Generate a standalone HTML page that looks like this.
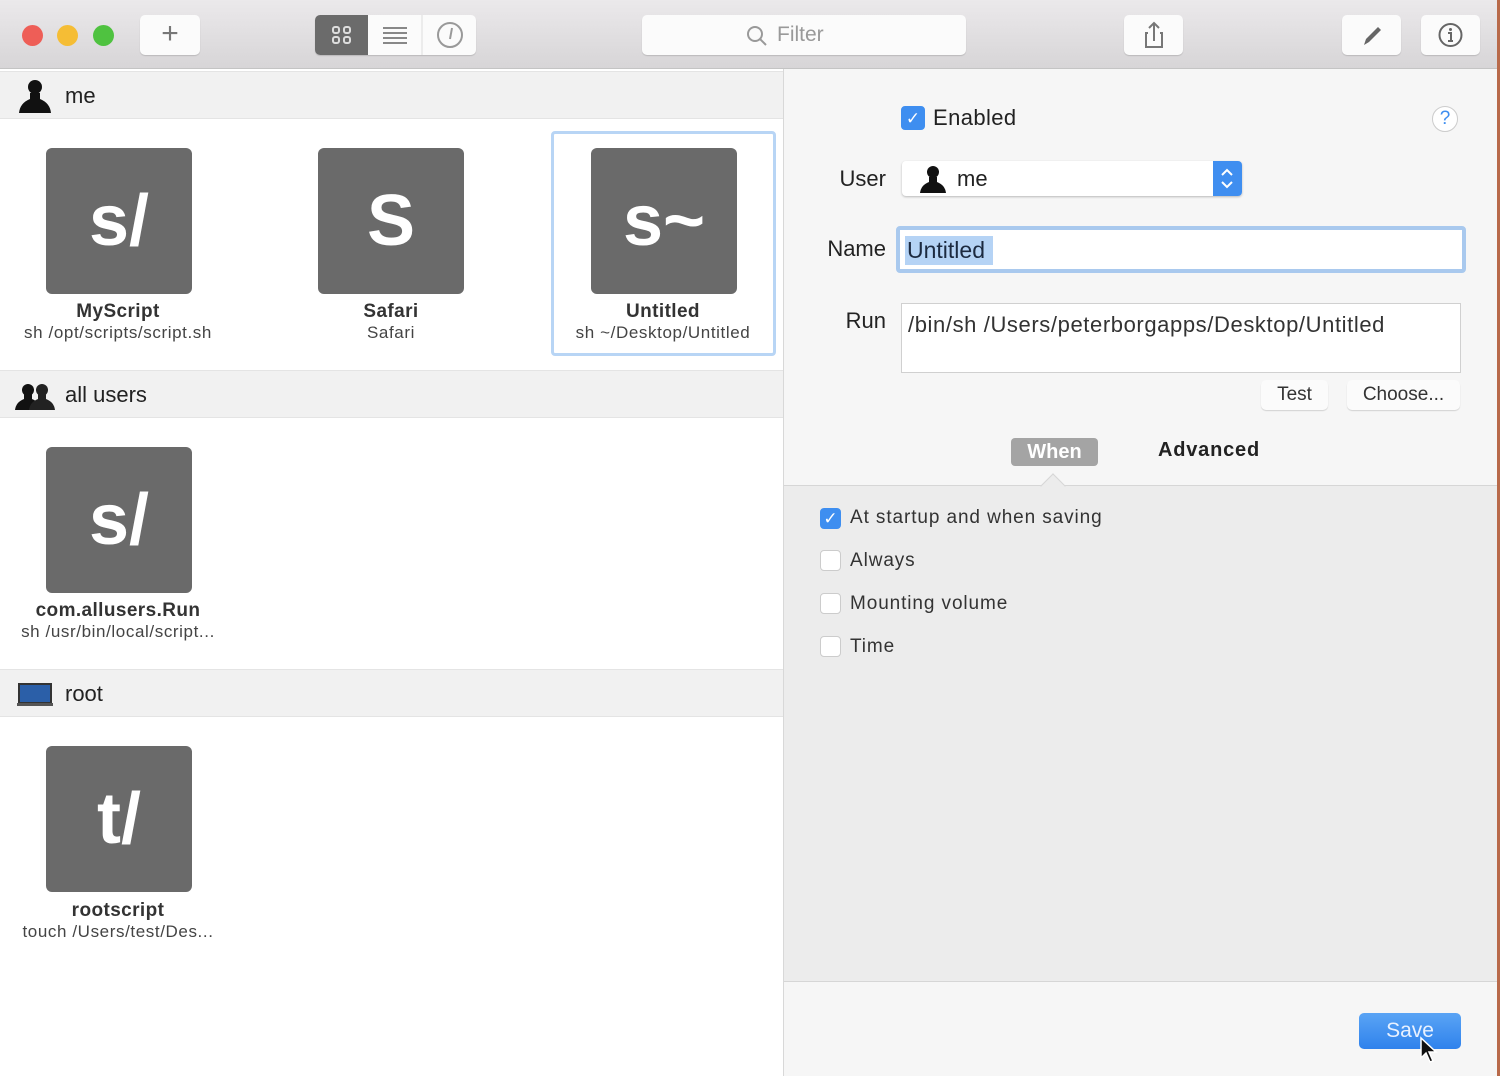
<!DOCTYPE html>
<html><head><meta charset="utf-8"><style>
*{margin:0;padding:0;box-sizing:border-box}
body{width:1500px;height:1076px;overflow:hidden;font-family:"Liberation Sans",sans-serif;background:#fff;position:relative;color:#222}
.a{position:absolute}
.tb{left:0;top:0;width:1500px;height:69px;background:linear-gradient(#ebe9eb,#d7d5d7);border-bottom:1px solid #c4c4c4}
.btn{position:absolute;background:#fbfbfb;border-radius:5px;box-shadow:0 1px 1px rgba(0,0,0,.15)}
.dot{position:absolute;top:25px;width:21px;height:21px;border-radius:50%}
.hdr{position:absolute;left:0;width:783px;height:48px;background:#f1f1f1;border-top:1px solid #e4e4e4;border-bottom:1px solid #e4e4e4;font-size:22px;color:#222}
.hdr span{position:absolute;left:65px;top:11px}
.tile{position:absolute;width:146px;height:146px;background:#6a6a6a;border-radius:6px;color:#fff;font-weight:bold;font-size:72px;text-align:center;line-height:146px}
.t1{position:absolute;width:260px;text-align:center;font-size:19px;font-weight:bold;color:#333;letter-spacing:.4px}
.t2{position:absolute;width:260px;text-align:center;font-size:17px;color:#444;letter-spacing:.6px}
.lbl{position:absolute;font-size:22px;color:#222;text-align:right;width:90px}
.cb{position:absolute;width:21px;height:21px;border-radius:4px;background:#fff;border:1px solid #ccc}
.cb.on{background:#3e8ef0;border-color:#3e8ef0;color:#fff;font-size:17px;text-align:center;line-height:20px}
.opt{position:absolute;left:850px;font-size:19px;color:#333;letter-spacing:.9px}
</style></head><body>
<div class="a tb"></div>
<div class="dot" style="left:22px;background:#ee5e57"></div>
<div class="dot" style="left:57px;background:#f5bd35"></div>
<div class="dot" style="left:93px;background:#4fc240"></div>
<div class="btn" style="left:140px;top:15px;width:60px;height:40px;color:#777;font-size:30px;text-align:center;line-height:38px">+</div>
<div class="btn" style="left:315px;top:15px;width:161px;height:40px"></div>
<div class="a" style="left:315px;top:15px;width:53px;height:40px;background:#6b6b6b;border-radius:5px 0 0 5px">
<svg width="53" height="40"><g fill="none" stroke="#ddd" stroke-width="2"><rect x="18" y="12" width="6" height="6" rx="2"/><rect x="29" y="12" width="6" height="6" rx="2"/><rect x="18" y="22" width="6" height="6" rx="2"/><rect x="29" y="22" width="6" height="6" rx="2"/></g></svg></div>
<svg class="a" style="left:368px;top:15px" width="108" height="40"><g stroke="#888" stroke-width="2"><line x1="15" y1="13" x2="39" y2="13"/><line x1="15" y1="18" x2="39" y2="18"/><line x1="15" y1="23" x2="39" y2="23"/><line x1="15" y1="28" x2="39" y2="28"/></g><line x1="54" y1="0" x2="54" y2="40" stroke="#ddd"/><circle cx="82" cy="20" r="12" fill="none" stroke="#999" stroke-width="2"/><path d="M82 24 L84 13" stroke="#999" stroke-width="2"/></svg>
<div class="btn" style="left:642px;top:15px;width:324px;height:40px;color:#999;font-size:21px;line-height:40px;padding-left:135px">Filter</div>
<svg class="a" style="left:746px;top:25px" width="22" height="22"><circle cx="9" cy="9" r="7" fill="none" stroke="#999" stroke-width="2"/><line x1="14" y1="14" x2="20" y2="20" stroke="#999" stroke-width="2"/></svg>
<div class="btn" style="left:1124px;top:15px;width:59px;height:40px"><svg width="59" height="40"><path d="M24 18 H22 V32 H38 V18 H36 M30 26 V8 M25 13 L30 8 L35 13" fill="none" stroke="#777" stroke-width="2"/></svg></div>
<div class="btn" style="left:1342px;top:15px;width:59px;height:40px"><svg width="59" height="40"><path d="M22 30 L24 24 L36 12 L39 15 L27 27 Z" fill="#666"/></svg></div>
<div class="btn" style="left:1421px;top:15px;width:59px;height:40px"><svg width="59" height="40"><circle cx="29.5" cy="20" r="11" fill="none" stroke="#666" stroke-width="2"/><circle cx="29.5" cy="14.5" r="1.5" fill="#666"/><path d="M27 18 H30 V26 M27 26 H32" stroke="#666" stroke-width="2" fill="none"/></svg></div>

<div class="hdr" style="top:71px"><svg class="a" style="left:16px;top:5px" width="38" height="38"><circle cx="19" cy="10" r="7" fill="#111"/><path d="M14 16 L14 22 Q4 26 3 36 H35 Q34 26 24 22 L24 16 Z" fill="#111"/></svg><span>me</span></div>
<div class="hdr" style="top:370px"><svg class="a" style="left:14px;top:10px" width="42" height="30"><circle cx="14" cy="9" r="6" fill="#111"/><path d="M10 13 V18 Q2 21 1 29 H27 Q26 21 18 18 V13Z" fill="#111"/><circle cx="28" cy="9" r="6" fill="#222"/><path d="M24 13 V18 Q16 21 15 29 H41 Q40 21 32 18 V13Z" fill="#222"/></svg><span>all users</span></div>
<div class="hdr" style="top:669px"><svg class="a" style="left:17px;top:13px" width="36" height="24"><rect x="2" y="1" width="32" height="19" fill="#2b5fa8" stroke="#333" stroke-width="2"/><rect x="0" y="20" width="36" height="3" fill="#555"/></svg><span>root</span></div>

<div class="a" style="left:551px;top:131px;width:225px;height:225px;border:3px solid #b8d5f5;border-radius:4px"></div>

<div class="tile" style="left:46px;top:148px">s/</div>
<div class="tile" style="left:318px;top:148px">S</div>
<div class="tile" style="left:591px;top:148px">s~</div>
<div class="t1" style="left:-12px;top:301px">MyScript</div><div class="t2" style="left:-12px;top:323px">sh /opt/scripts/script.sh</div>
<div class="t1" style="left:261px;top:301px">Safari</div><div class="t2" style="left:261px;top:323px">Safari</div>
<div class="t1" style="left:533px;top:301px">Untitled</div><div class="t2" style="left:533px;top:323px">sh ~/Desktop/Untitled</div>
<div class="tile" style="left:46px;top:447px">s/</div>
<div class="t1" style="left:-12px;top:600px">com.allusers.Run</div><div class="t2" style="left:-12px;top:622px">sh /usr/bin/local/script...</div>
<div class="tile" style="left:46px;top:746px">t/</div>
<div class="t1" style="left:-12px;top:900px">rootscript</div><div class="t2" style="left:-12px;top:922px">touch /Users/test/Des...</div>

<div class="a" style="left:783px;top:69px;width:715px;height:1007px;background:#f6f6f6;border-left:1px solid #d8d8d8"></div>
<div class="a" style="left:784px;top:485px;width:713px;height:497px;background:#ececec;border-top:1px solid #d6d6d6;border-bottom:1px solid #d6d6d6"></div>
<div class="a" style="left:1497px;top:0;width:3px;height:1076px;background:#b86a4a"></div>

<div class="cb on" style="left:901px;top:106px;width:24px;height:24px;line-height:24px">✓</div>
<div class="a" style="left:933px;top:105px;font-size:22px;letter-spacing:.4px">Enabled</div>
<div class="a" style="left:1432px;top:106px;width:26px;height:26px;border-radius:50%;background:#fff;border:1px solid #ccc;color:#3e8ef0;text-align:center;font-size:19px;line-height:24px">?</div>

<div class="lbl" style="left:796px;top:166px">User</div>
<div class="a" style="left:902px;top:161px;width:340px;height:35px;background:#fff;border-radius:4px;box-shadow:0 1px 2px rgba(0,0,0,.25)"></div>
<svg class="a" style="left:917px;top:163px" width="32" height="32"><circle cx="16" cy="9" r="6" fill="#111"/><path d="M12 14 V19 Q4 22 3 30 H29 Q28 22 20 19 V14Z" fill="#111"/></svg>
<div class="a" style="left:957px;top:166px;font-size:22px">me</div>
<div class="a" style="left:1213px;top:161px;width:29px;height:35px;background:#3f8ef0;border-radius:0 4px 4px 0"><svg width="29" height="35"><path d="M9 14 L14 9 L19 14 M9 21 L14 26 L19 21" fill="none" stroke="#fff" stroke-width="2"/></svg></div>

<div class="lbl" style="left:796px;top:236px">Name</div>
<div class="a" style="left:896px;top:226px;width:570px;height:47px;border:4px solid #a9c9ee;border-radius:4px;background:#fff"></div>
<div class="a" style="left:905px;top:236px;height:29px;width:88px;background:#b5d3f5"></div>
<div class="a" style="left:907px;top:237px;font-size:23px;color:#1c2a40">Untitled</div>

<div class="lbl" style="left:796px;top:308px">Run</div>
<div class="a" style="left:901px;top:303px;width:560px;height:70px;background:#fff;border:1px solid #d0d0d0"></div>
<div class="a" style="left:908px;top:312px;font-size:22px;color:#333;letter-spacing:.6px">/bin/sh /Users/peterborgapps/Desktop/Untitled</div>
<div class="btn" style="left:1261px;top:380px;width:67px;height:30px;font-size:19px;text-align:center;line-height:30px;color:#333">Test</div>
<div class="btn" style="left:1347px;top:380px;width:113px;height:30px;font-size:19px;text-align:center;line-height:30px;color:#333">Choose...</div>

<div class="a" style="left:1011px;top:438px;width:87px;height:28px;background:#a4a4a4;border-radius:4px;color:#fff;font-weight:bold;font-size:20px;text-align:center;line-height:28px">When</div>
<div class="a" style="left:1158px;top:439px;font-weight:bold;font-size:20px;color:#222;letter-spacing:.8px">Advanced</div>
<div class="a" style="left:1044px;top:477px;width:18px;height:18px;background:#ececec;border-left:1px solid #d6d6d6;border-top:1px solid #d6d6d6;transform:rotate(45deg)"></div>

<div class="cb on" style="left:820px;top:508px">✓</div><div class="opt" style="top:507px">At startup and when saving</div>
<div class="cb" style="left:820px;top:550px"></div><div class="opt" style="top:550px">Always</div>
<div class="cb" style="left:820px;top:593px"></div><div class="opt" style="top:593px">Mounting volume</div>
<div class="cb" style="left:820px;top:636px"></div><div class="opt" style="top:636px">Time</div>

<div class="a" style="left:1359px;top:1013px;width:102px;height:36px;background:linear-gradient(#5aa4f5,#2f82ec);border-radius:5px;color:#e8f1ff;font-size:21px;text-align:center;line-height:36px">Save</div>
<svg class="a" style="left:1419px;top:1036px" width="20" height="30"><path d="M2 2 L2 22 L7 17 L11 26 L14 25 L10 16 L17 16 Z" fill="#111" stroke="#fff" stroke-width="1.5"/></svg>
</body></html>
